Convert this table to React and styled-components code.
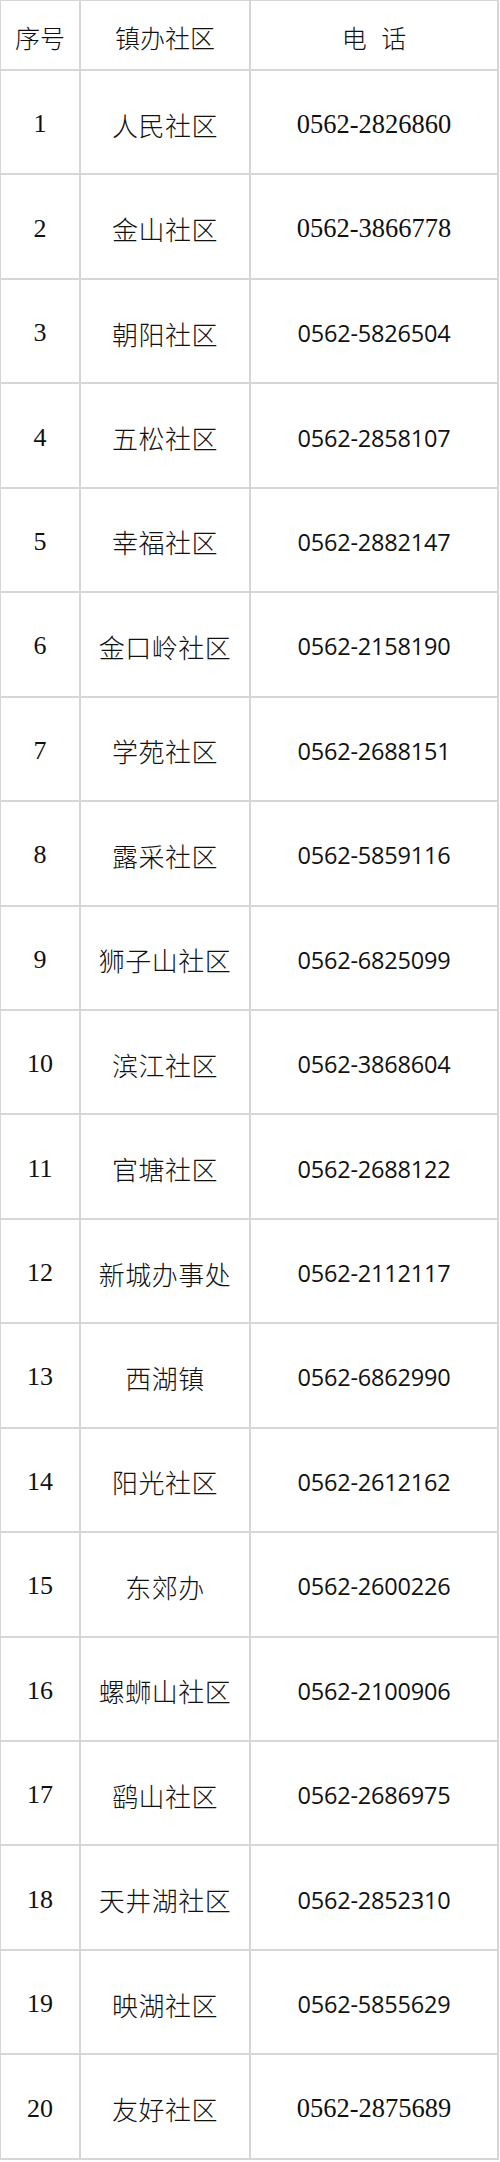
import React from "react";
import styled, { createGlobalStyle } from "styled-components";

const GlobalStyle = createGlobalStyle`
  html, body {
    margin: 0;
    padding: 0;
    background: #ffffff;
  }
  body {
    width: 500px;
    min-height: 2162px;
  }
`;

const Table = styled.div`
  display: grid;
  grid-template-columns: 80px 170px 248px;
  grid-template-rows: 70px repeat(20, 104.45px);
  width: 498px;
  border-top: 2px solid #d6d6d6;
  border-left: 2px solid #d6d6d6;
  box-sizing: content-box;
  margin-top: -1px;
  margin-left: -1px;
`;

const Cell = styled.div`
  display: flex;
  align-items: center;
  justify-content: center;
  box-sizing: border-box;
  border-right: 2px solid #d6d6d6;
  border-bottom: 2px solid #d6d6d6;
  color: #111111;
  padding-top: 4px;
  white-space: nowrap;
`;

const HeadCell = styled(Cell)`
  font-family: "Noto Sans CJK SC", "Noto Sans CJK JP", sans-serif;
  font-weight: 300;
  font-size: 25px;
  word-spacing: 0.35em;
`;

const NumCell = styled(Cell)`
  font-family: "Liberation Serif", "Times New Roman", serif;
  font-size: 26px;
`;

const NameCell = styled(Cell)`
  font-family: "Noto Sans CJK SC", "Noto Sans CJK JP", sans-serif;
  font-weight: 300;
  font-size: 26px;
  letter-spacing: 0.5px;
`;

const SerifPhoneCell = styled(Cell)`
  font-family: "Liberation Serif", "Times New Roman", serif;
  font-size: 26.5px;
`;

const SansPhoneCell = styled(Cell)`
  font-family: "Open Sans", "Liberation Sans", sans-serif;
  font-size: 23.5px;
  letter-spacing: -0.2px;
`;

const rows = [
  ["人民社区", "0562-2826860", true],
  ["金山社区", "0562-3866778", true],
  ["朝阳社区", "0562-5826504", false],
  ["五松社区", "0562-2858107", false],
  ["幸福社区", "0562-2882147", false],
  ["金口岭社区", "0562-2158190", false],
  ["学苑社区", "0562-2688151", false],
  ["露采社区", "0562-5859116", false],
  ["狮子山社区", "0562-6825099", false],
  ["滨江社区", "0562-3868604", false],
  ["官塘社区", "0562-2688122", false],
  ["新城办事处", "0562-2112117", false],
  ["西湖镇", "0562-6862990", false],
  ["阳光社区", "0562-2612162", false],
  ["东郊办", "0562-2600226", false],
  ["螺蛳山社区", "0562-2100906", false],
  ["鹞山社区", "0562-2686975", false],
  ["天井湖社区", "0562-2852310", false],
  ["映湖社区", "0562-5855629", false],
  ["友好社区", "0562-2875689", true],
];

export default function App() {
  return (
    <>
      <GlobalStyle />
      <Table>
        <HeadCell>序号</HeadCell>
        <HeadCell>镇办社区</HeadCell>
        <HeadCell>电 话</HeadCell>
        {rows.map(([name, phone, serif], i) => (
          <React.Fragment key={i}>
            <NumCell>{i + 1}</NumCell>
            <NameCell>{name}</NameCell>
            {serif ? (
              <SerifPhoneCell>{phone}</SerifPhoneCell>
            ) : (
              <SansPhoneCell>{phone}</SansPhoneCell>
            )}
          </React.Fragment>
        ))}
      </Table>
    </>
  );
}
